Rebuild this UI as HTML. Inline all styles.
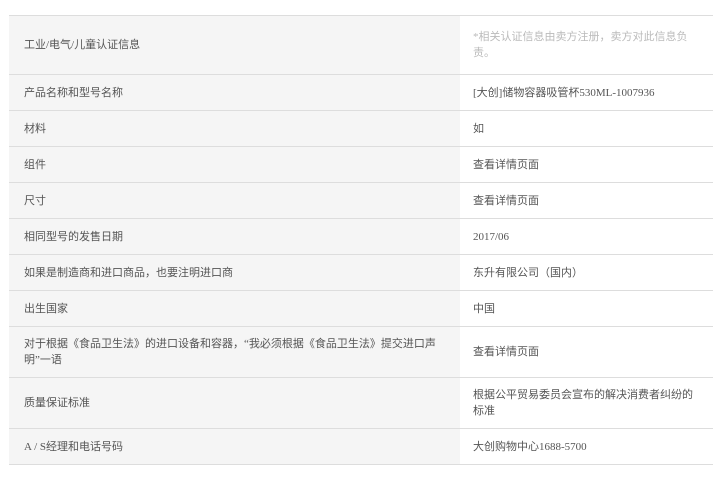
<!DOCTYPE html>
<html><head><meta charset="utf-8"><style>
body{margin:0;background:#fff;width:721px;height:499px;overflow:hidden;font-family:"Liberation Serif","Noto Sans CJK SC",serif;font-size:11px;color:#555;}
table{position:absolute;left:9px;top:15px;width:704px;border-collapse:collapse;}
td{border-top:1px solid #ddd;border-bottom:1px solid #ddd;padding:0 15px;line-height:16px;vertical-align:middle;}
td.l{background:#f5f5f5;width:421px;}
td.r{padding-left:13px;}
</style></head><body>
<table>
<tr style="height:59px"><td class="l">工业/电气/儿童认证信息</td><td class="r" style="color:#bbb">*相关认证信息由卖方注册，卖方对此信息负责。</td></tr>
<tr style="height:36px"><td class="l">产品名称和型号名称</td><td class="r">[大创]储物容器吸管杯530ML-1007936</td></tr>
<tr style="height:36px"><td class="l">材料</td><td class="r">如</td></tr>
<tr style="height:36px"><td class="l">组件</td><td class="r">查看详情页面</td></tr>
<tr style="height:36px"><td class="l">尺寸</td><td class="r">查看详情页面</td></tr>
<tr style="height:36px"><td class="l">相同型号的发售日期</td><td class="r">2017/06</td></tr>
<tr style="height:36px"><td class="l">如果是制造商和进口商品，也要注明进口商</td><td class="r">东升有限公司（国内）</td></tr>
<tr style="height:36px"><td class="l">出生国家</td><td class="r">中国</td></tr>
<tr style="height:51px"><td class="l">对于根据《食品卫生法》的进口设备和容器，“我必须根据《食品卫生法》提交进口声明”一语</td><td class="r">查看详情页面</td></tr>
<tr style="height:51px"><td class="l">质量保证标准</td><td class="r">根据公平贸易委员会宣布的解决消费者纠纷的标准</td></tr>
<tr style="height:36px"><td class="l">A / S经理和电话号码</td><td class="r">大创购物中心1688-5700</td></tr>
</table>
</body></html>
